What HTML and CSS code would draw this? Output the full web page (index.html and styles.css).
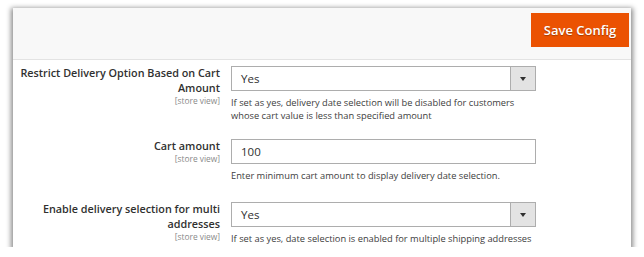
FILE: index.html
```html
<!DOCTYPE html>
<html lang="en">
<head>
    <meta charset="UTF-8">
    <title>Delivery Date Config</title>
    <link rel="stylesheet" href="styles.css">
</head>
<body>
    <div class="frame">
        <div class="page-actions">
            <button class="btn-save">Save Config</button>
        </div>

        <div class="config">
            <div class="row">
                <div class="label">
                    Restrict Delivery Option Based on Cart Amount
                    <span class="scope">[store view]</span>
                </div>
                <div class="control">
                    <div class="select">
                        <span>Yes</span>
                        <span class="arrow"></span>
                    </div>
                    <p class="note">If set as yes, delivery date selection will be disabled for customers whose cart value is less than specified amount</p>
                </div>
            </div>

            <div class="row row-input">
                <div class="label">
                    Cart amount
                    <span class="scope">[store view]</span>
                </div>
                <div class="control">
                    <div class="input">100</div>
                    <p class="note">Enter minimum cart amount to display delivery date selection.</p>
                </div>
            </div>

            <div class="row">
                <div class="label">
                    Enable delivery selection for multi addresses
                    <span class="scope">[store view]</span>
                </div>
                <div class="control">
                    <div class="select">
                        <span>Yes</span>
                        <span class="arrow"></span>
                    </div>
                    <p class="note">If set as yes, date selection is enabled for multiple shipping addresses</p>
                </div>
            </div>
        </div>
    </div>
</body>
</html>
```

FILE: styles.css
```css
body {
    margin: 0;
    background-color: #fff;
    font-family: "Open Sans", Arial, sans-serif;
    color: #303030;
}
.frame {
    margin: 8px 0 0 13px;
    width: 618px;
    height: 239px;
    overflow: hidden;
    background-color: #fff;
    box-shadow: 0 2px 5px 2px rgba(0,0,0,0.45);
}
.page-actions {
    height: 51px;
    background-color: #f8f8f8;
    border-bottom: 1px solid #e3e3e3;
    display: flex;
    justify-content: flex-end;
    align-items: flex-start;
    padding-right: 2px;
}
.btn-save {
    margin-top: 5px;
    width: 98px;
    height: 34px;
    border: 0;
    background-color: #eb5202;
    color: #fff;
    font-family: "Open Sans", Arial, sans-serif;
    font-weight: 600;
    font-size: 13px;
    text-shadow: 0 1px 1px rgba(0,0,0,0.3);
    padding: 0;
}
.config {
    padding-top: 5px;
}
.row {
    display: grid;
    grid-template-columns: 207px 305px;
    column-gap: 11px;
    margin-bottom: 16px;
}
.row-input {
    margin-bottom: 19px;
}
.label {
    text-align: right;
    font-size: 10.8px;
    font-weight: 600;
    line-height: 15px;
}
.scope {
    display: block;
    font-size: 8.4px;
    font-weight: 400;
    line-height: 11px;
    color: #8a8a8a;
}
.control {
    padding-top: 1px;
}
.select,
.input {
    height: 23px;
    border: 1px solid #adadad;
    display: flex;
    align-items: center;
    justify-content: space-between;
    font-size: 11.5px;
    padding-left: 9px;
}
.arrow {
    width: 24px;
    height: 23px;
    background-color: #e3e3e3;
    border-left: 1px solid #adadad;
    position: relative;
}
.arrow::after {
    content: "";
    position: absolute;
    left: 9px;
    top: 10px;
    border-left: 3px solid transparent;
    border-right: 3px solid transparent;
    border-top: 4px solid #303030;
}
.note {
    margin: 5px 0 0;
    font-size: 9.3px;
    line-height: 13px;
    color: #3d3d3d;
}
```
